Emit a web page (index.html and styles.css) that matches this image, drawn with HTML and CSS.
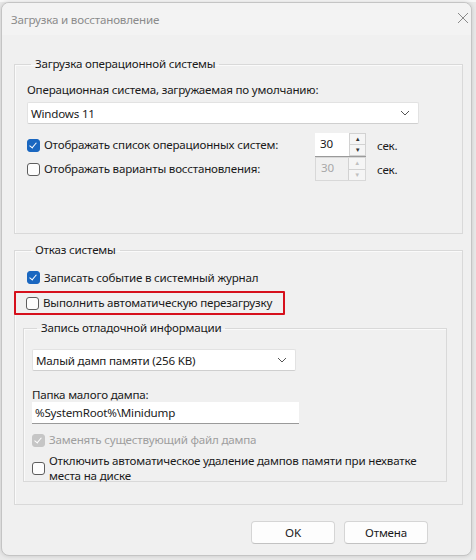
FILE: index.html
```html
<!DOCTYPE html>
<html lang="ru">

<head>
  <meta charset="UTF-8">
  <meta name="viewport" content="width=device-width, initial-scale=1.0">
  <title>Загрузка и восстановление</title>
  <link rel="stylesheet" href="styles.css">
</head>

<body>
  <div class="backdrop"></div>
  <div class="window">
    <div class="titlebar">
      <span class="title">Загрузка и восстановление</span>
      <svg class="close" width="12" height="12" viewBox="0 0 12 12">
        <path d="M1 1 L11 11 M11 1 L1 11" stroke="#8a8a8a" stroke-width="1" fill="none" />
      </svg>
    </div>

    <div class="body">
      <!-- загрузка ОС -->
      <fieldset class="group group-boot">
        <legend>Загрузка операционной системы</legend>
        <div class="label">Операционная система, загружаемая по умолчанию:</div>
        <div class="select select-os">
          <span>Windows 11</span>
          <svg width="10" height="6" viewBox="0 0 10 6"><path d="M1 1 L5 5 L9 1" stroke="#555" fill="none" /></svg>
        </div>

        <div class="row row-spin first">
          <span class="check checked"></span>
          <span class="row-text">Отображать список операционных систем:</span>
          <div class="spin">
            <span class="spin-value">30</span>
            <span class="spin-btns">
              <span class="spin-up">&#9650;</span>
              <span class="spin-down">&#9660;</span>
            </span>
          </div>
          <span class="unit">сек.</span>
        </div>

        <div class="row row-spin">
          <span class="check"></span>
          <span class="row-text">Отображать варианты восстановления:</span>
          <div class="spin disabled">
            <span class="spin-value">30</span>
            <span class="spin-btns">
              <span class="spin-up">&#9650;</span>
              <span class="spin-down">&#9660;</span>
            </span>
          </div>
          <span class="unit">сек.</span>
        </div>
      </fieldset>

      <!-- отказ системы -->
      <fieldset class="group group-fail">
        <legend>Отказ системы</legend>
        <div class="row first">
          <span class="check checked"></span>
          <span class="row-text">Записать событие в системный журнал</span>
        </div>
        <div class="row marked">
          <span class="check"></span>
          <span class="row-text">Выполнить автоматическую перезагрузку</span>
        </div>

        <fieldset class="group group-dump">
          <legend>Запись отладочной информации</legend>
          <div class="select select-dump">
            <span>Малый дамп памяти (256 KB)</span>
            <svg width="10" height="6" viewBox="0 0 10 6"><path d="M1 1 L5 5 L9 1" stroke="#555" fill="none" /></svg>
          </div>
          <div class="label label-folder">Папка малого дампа:</div>
          <div class="textbox">%SystemRoot%\Minidump</div>
          <div class="row row-small disabled">
            <span class="check checked grey"></span>
            <span class="row-text">Заменять существующий файл дампа</span>
          </div>
          <div class="row row-small row-wrap">
            <span class="check"></span>
            <span class="row-text">Отключить автоматическое удаление дампов памяти при нехватке места на диске</span>
          </div>
        </fieldset>
      </fieldset>

      <div class="buttons">
        <button type="button" class="btn">OK</button>
        <button type="button" class="btn">Отмена</button>
      </div>
    </div>
  </div>
</body>

</html>
```

FILE: styles.css
```css
body {
  margin: 0;
  padding: 0;
  width: 476px;
  height: 560px;
  overflow: hidden;
  background-color: #e9e9e9;
  font-family: "Noto Sans", "Liberation Sans", sans-serif;
  font-size: 11.6px;
  letter-spacing: -0.2px;
  color: #1a1a1a;
}

/* полоска родительского окна сверху */
.backdrop {
  height: 2px;
  background-color: #f7f7f7;
}

.window {
  width: 469px;
  height: 552px;
  margin-left: 1px;
  background-color: #f0f0f0;
  border: 1px solid #c4c4c4;
  border-radius: 8px;
  box-shadow: 0 0 4px rgba(0, 0, 0, 0.15);
  display: flex;
  flex-direction: column;
  overflow: hidden;
}

.titlebar {
  height: 32px;
  display: flex;
  align-items: center;
  justify-content: space-between;
  padding: 0 2px 0 9px;
  background-color: #f3f3f3;
}

.title {
  color: #8b8b8b;
}

.close {
  margin-top: -3px;
}

.body {
  padding: 0 8px 0 12px;
  display: flex;
  flex-direction: column;
}

.group {
  margin: 0;
  padding: 0 0 0 12px;
  border: 1px solid #d9d9d9;
  box-shadow: inset 1px 1px 0 #fafafa;
}

.group legend {
  padding: 0 4px 0 4px;
  margin-left: 4px;
  line-height: 16px;
}

.group-boot {
  margin-top: 21px;
  height: 178px;
  box-sizing: border-box;
}

.label {
  margin-top: 10px;
  line-height: 16px;
}

.select {
  height: 22px;
  box-sizing: border-box;
  background-color: #fff;
  border: 1px solid #e2e2e2;
  border-bottom-color: #cfcfcf;
  border-radius: 2px;
  display: flex;
  align-items: center;
  justify-content: space-between;
  padding: 0 8px 0 3px;
}

.select-os {
  width: 392px;
  margin-top: 4px;
}

.row {
  display: flex;
  align-items: center;
  height: 23px;
}

.row-spin {
  height: 24px;
  margin-top: 0;
}

.row-spin.first {
  margin-top: 9px;
}

.check {
  width: 13px;
  height: 13px;
  box-sizing: border-box;
  border: 1px solid #5e5e5e;
  border-radius: 3px;
  background-color: #fdfdfd;
  margin-right: 4px;
  flex-shrink: 0;
  position: relative;
}

.check.checked {
  background-color: #1a67c0;
  border-color: #1a67c0;
}

.check.checked::after {
  content: "";
  position: absolute;
  left: 3px;
  top: 1px;
  width: 3px;
  height: 6px;
  border: solid #fff;
  border-width: 0 1px 1px 0;
  transform: rotate(40deg);
}

.check.grey {
  background-color: #c6c6c6;
  border-color: #c6c6c6;
}

.row-text {
  line-height: 16px;
}

.row-spin .row-text {
  width: 271px;
}

.spin {
  width: 51px;
  height: 24px;
  box-sizing: border-box;
  display: flex;
  background-color: #fff;
  border-bottom: 1px solid #9a9a9a;
}

.spin-value {
  flex: 1;
  padding-left: 5px;
  line-height: 22px;
}

.spin-btns {
  width: 17px;
  display: flex;
  flex-direction: column;
  border: 1px solid #d2d2d2;
  box-sizing: border-box;
  background-color: #f5f5f5;
}

.spin-btns span {
  flex: 1;
  font-size: 6px;
  line-height: 10px;
  text-align: center;
  color: #333;
}

.spin-up {
  border-bottom: 1px solid #d2d2d2;
}

.spin.disabled {
  background-color: #f0f0f0;
  border: 1px solid #d8d8d8;
}

.spin.disabled .spin-value {
  color: #a8a8a8;
  line-height: 20px;
}

.spin.disabled .spin-btns {
  border-width: 0 0 0 1px;
}

.spin.disabled .spin-btns span {
  color: #c0c0c0;
}

.unit {
  margin-left: 11px;
}

.group-fail {
  margin-top: 8px;
  height: 263px;
  box-sizing: border-box;
}

.group-fail > .row.first {
  margin-top: 8px;
}

.marked {
  margin: 2px 0 0 -13px;
  padding-left: 10px;
  width: 271px;
  height: 24px;
  box-sizing: border-box;
  border: 2px solid #d6101c;
  border-radius: 1px;
}

.group-dump {
  margin: 5px 15px 0 -4px;
  padding-left: 8px;
  height: 162px;
  box-sizing: border-box;
}

.group-dump legend {
  margin-left: 5px;
}

.select-dump {
  width: 264px;
  margin-top: 13px;
}

.label-folder {
  margin-top: 16px;
}

.textbox {
  width: 267px;
  height: 22px;
  box-sizing: border-box;
  background-color: #fff;
  border-bottom: 1px solid #9a9a9a;
  padding-left: 3px;
  line-height: 22px;
  margin-top: -1px;
}

.row-small {
  height: 18px;
  margin-top: 7px;
}

.row.disabled {
  color: #9e9e9e;
}

.row-wrap {
  margin-top: 3px;
  height: 32px;
}

.row-wrap .row-text {
  width: 380px;
  line-height: 15px;
}

.buttons {
  display: flex;
  justify-content: flex-end;
  gap: 9px;
  margin-top: 16px;
  padding-right: 35px;
}

.btn {
  width: 84px;
  height: 23px;
  background-color: #fdfdfd;
  border: 1px solid #d5d5d5;
  border-bottom-color: #c2c2c2;
  border-radius: 4px;
  font-family: "Noto Sans", "Liberation Sans", sans-serif;
  font-size: 11.6px;
  letter-spacing: -0.2px;
  color: #1a1a1a;
  padding: 0;
}
```
